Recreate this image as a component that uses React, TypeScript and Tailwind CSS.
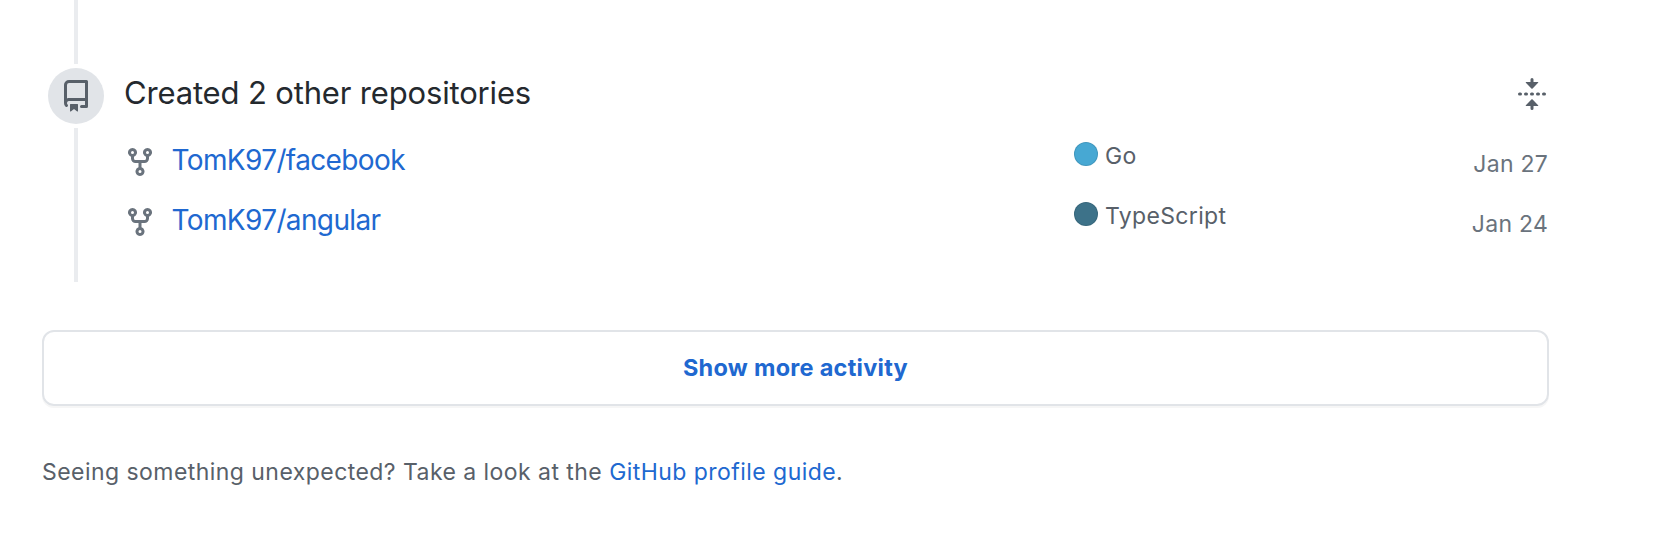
const REPO =
  'M2 2.5A2.5 2.5 0 014.5 0h8.75a.75.75 0 01.75.75v12.5a.75.75 0 01-.75.75h-2.5a.75.75 0 110-1.5h1.75v-2h-8a1 1 0 00-.714 1.7.75.75 0 01-1.072 1.05A2.495 2.495 0 012 11.5v-9zm10.5-1V9h-8c-.356 0-.694.074-1 .208V2.5a1 1 0 011-1h8zM5 12.25v3.25a.25.25 0 00.4.2l1.45-1.087a.25.25 0 01.3 0L8.6 15.7a.25.25 0 00.4-.2v-3.25a.25.25 0 00-.25-.25h-3.5a.25.25 0 00-.25.25z'
const FORK =
  'M5 3.25a.75.75 0 11-1.5 0 .75.75 0 011.5 0zm0 2.122a2.25 2.25 0 10-1.5 0v.878A2.25 2.25 0 005.75 8.5h1.5v2.128a2.251 2.251 0 101.5 0V8.5h1.5a2.25 2.25 0 002.25-2.25v-.878a2.25 2.25 0 10-1.5 0v.878a.75.75 0 01-.75.75h-4.5A.75.75 0 015 6.25v-.878zm3.75 7.378a.75.75 0 11-1.5 0 .75.75 0 011.5 0zm3-8.75a.75.75 0 100-1.5.75.75 0 000 1.5z'
const FOLD =
  'M10.896 2H8.75V.75a.75.75 0 00-1.5 0V2H5.104a.25.25 0 00-.177.427l2.896 2.896a.25.25 0 00.354 0l2.896-2.896A.25.25 0 0010.896 2zM8.75 15.25a.75.75 0 01-1.5 0V14H5.104a.25.25 0 01-.177-.427l2.896-2.896a.25.25 0 01.354 0l2.896 2.896a.25.25 0 01-.177.427H8.75v1.25zm-6.5-6.5a.75.75 0 000-1.5h-.5a.75.75 0 000 1.5h.5zM6 8a.75.75 0 01-.75.75h-.5a.75.75 0 010-1.5h.5A.75.75 0 016 8zm2.25.75a.75.75 0 000-1.5h-.5a.75.75 0 000 1.5h.5zM12 8a.75.75 0 01-.75.75h-.5a.75.75 0 010-1.5h.5A.75.75 0 0112 8zm2.25.75a.75.75 0 000-1.5h-.5a.75.75 0 000 1.5h.5z'

function Icon({ d, className }: { d: string; className: string }) {
  return (
    <svg viewBox="0 0 16 16" fill="currentColor" className={`size-8 shrink-0 ${className}`} aria-hidden="true">
      <path fillRule="evenodd" d={d} />
    </svg>
  )
}

const repos = [
  { name: 'TomK97/facebook', language: 'Go', dot: 'bg-[#47a8d3]', date: 'Jan 27' },
  { name: 'TomK97/angular', language: 'TypeScript', dot: 'bg-[#3d7289]', date: 'Jan 24' },
]

export default function App() {
  return (
    <main className="h-[538px] w-[1674px] overflow-hidden bg-white pl-[42px] font-['Inter',sans-serif] text-[#586069] antialiased">
      <section className="flex h-[282px] w-[1507px]">
        <div className="flex w-[68px] shrink-0 flex-col items-center">
          <div className="h-16 w-1 bg-[#eaecef]" />
          <div className="my-1 flex size-14 items-center justify-center rounded-full bg-[#e1e4e8]">
            <Icon d={REPO} className="text-[#586069]" />
          </div>
          <div className="w-1 grow bg-[#eaecef]" />
        </div>
        <div className="grow pt-[68px] pl-[14px]">
          <header className="flex h-[52px] items-start justify-between">
            <h4 className="text-[31px] leading-[49px] tracking-[-0.16px] text-[#24292e]">
              Created 2 other repositories
            </h4>
            <Icon d={FOLD} className="mt-[10px] mr-px" />
          </header>
          <ul className="pt-[10px]">
            {repos.map((repo) => (
              <li key={repo.name} className="flex h-[60px] items-start">
                <Icon d={FORK} className="mt-4 text-[#6a737d]" />
                <a href="#" className="ml-[15.5px] w-[902.5px] text-[28px] leading-[60px] tracking-[-0.63px] text-[#2068d0]">
                  {repo.name}
                </a>
                <span className="flex items-start">
                  <span className={`mt-3 size-6 rounded-full border border-black/10 ${repo.dot}`} />
                  <span className="ml-[7px] text-[23px] leading-[53px] tracking-[0.35px]">{repo.language}</span>
                </span>
                <time className="mr-px ml-auto text-[23px] leading-[69px] tracking-[0.25px] text-[#6a737d]">{repo.date}</time>
              </li>
            ))}
          </ul>
        </div>
      </section>
      <button className="mt-12 flex h-[76px] w-[1507px] items-center justify-center rounded-xl border-2 border-[#e1e4e8] text-[23.5px] font-bold tracking-[0.27px] text-[#2068d0] shadow-[0_2px_0_rgba(27,31,35,0.04)]">
        Show more activity
      </button>
      <p className="mt-12 text-[23px] leading-9 tracking-[0.45px]">
        Seeing something unexpected? Take a look at the{' '}
        <a href="#" className="text-[#2068d0]">
          GitHub profile guide
        </a>
        .
      </p>
    </main>
  )
}
